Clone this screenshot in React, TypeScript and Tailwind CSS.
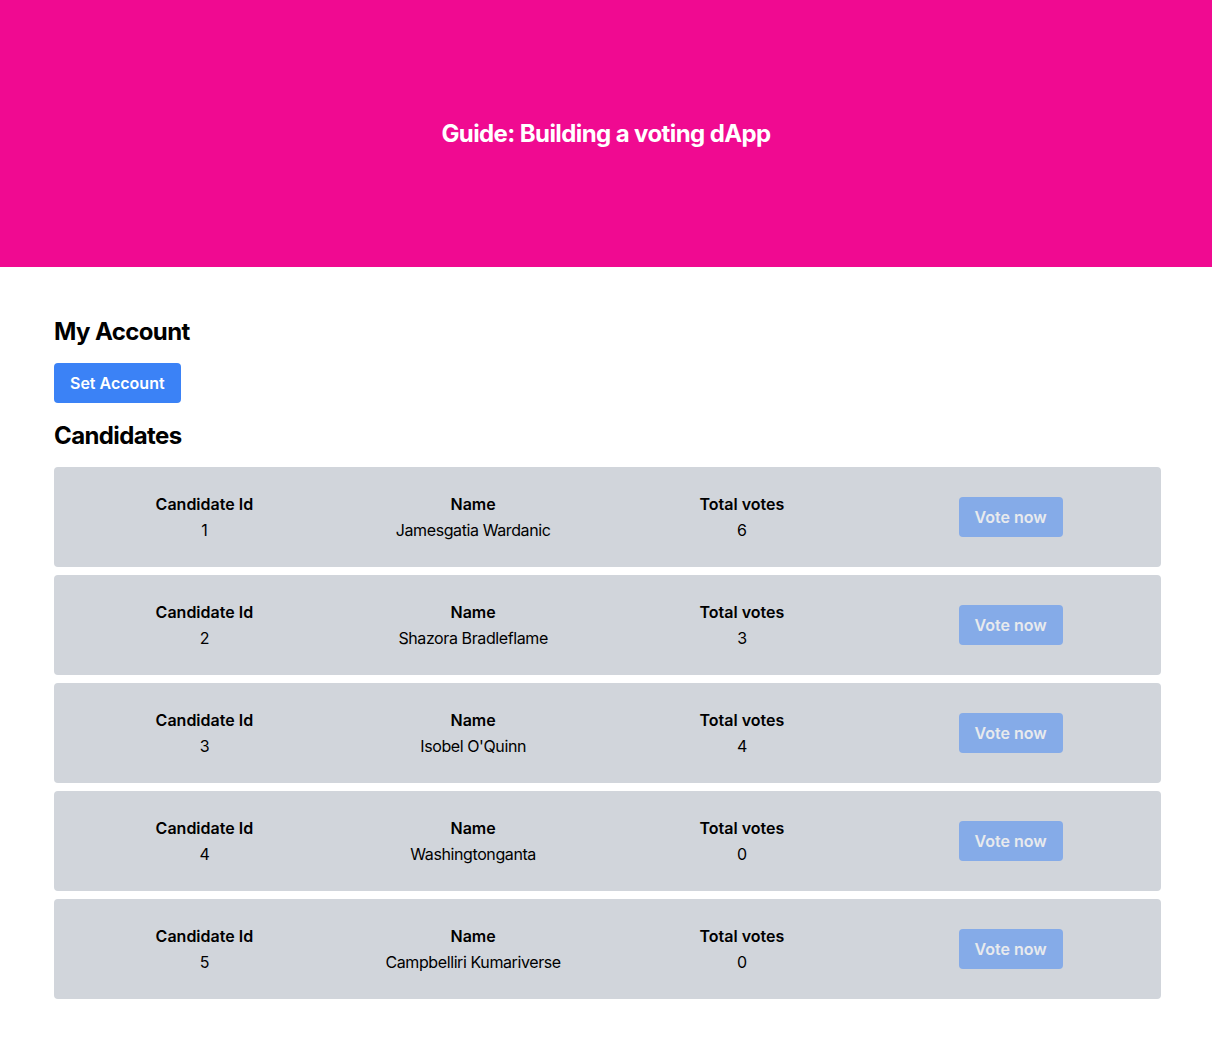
const candidates = [
	{ id: 1, name: "Jamesgatia Wardanic", votes: 6 },
	{ id: 2, name: "Shazora Bradleflame", votes: 3 },
	{ id: 3, name: "Isobel O'Quinn", votes: 4 },
	{ id: 4, name: "Washingtonganta", votes: 0 },
	{ id: 5, name: "Campbelliri Kumariverse", votes: 0 },
];

export default function App() {
	return (
		<div className="min-h-screen bg-white text-black font-['Inter',sans-serif]">
			{/* Header */}
			<header className="h-[267px] bg-[#f00a91] flex items-center justify-center">
				<h1 className="text-2xl font-bold text-white tracking-tight">Guide: Building a voting dApp</h1>
			</header>

			<main className="ml-[54px] mr-[51px] pt-[49px] pb-12">
				<h2 className="text-2xl font-bold tracking-tight">My Account</h2>
				<button className="mt-[15px] px-4 h-10 rounded bg-[#3b82f6] text-white font-semibold">
					Set Account
				</button>

				<h2 className="mt-[17px] text-2xl font-bold tracking-tight">Candidates</h2>

				<div className="mt-[15px] flex flex-col gap-2">
					{candidates.map((c) => (
						<div
							key={c.id}
							className="grid grid-cols-4 items-center px-4 py-6 bg-[#d1d5db] rounded leading-[26px]"
						>
							<div className="text-center">
								<div className="font-semibold">Candidate Id</div>
								<div className="tracking-tight">{c.id}</div>
							</div>
							<div className="text-center">
								<div className="font-semibold">Name</div>
								<div className="tracking-tight">{c.name}</div>
							</div>
							<div className="text-center">
								<div className="font-semibold">Total votes</div>
								<div className="tracking-tight">{c.votes}</div>
							</div>
							<div className="flex justify-center">
								<button className="px-4 h-10 rounded bg-[#3b82f6] text-white font-semibold opacity-50" disabled>
									Vote now
								</button>
							</div>
						</div>
					))}
				</div>
			</main>
		</div>
	);
}
